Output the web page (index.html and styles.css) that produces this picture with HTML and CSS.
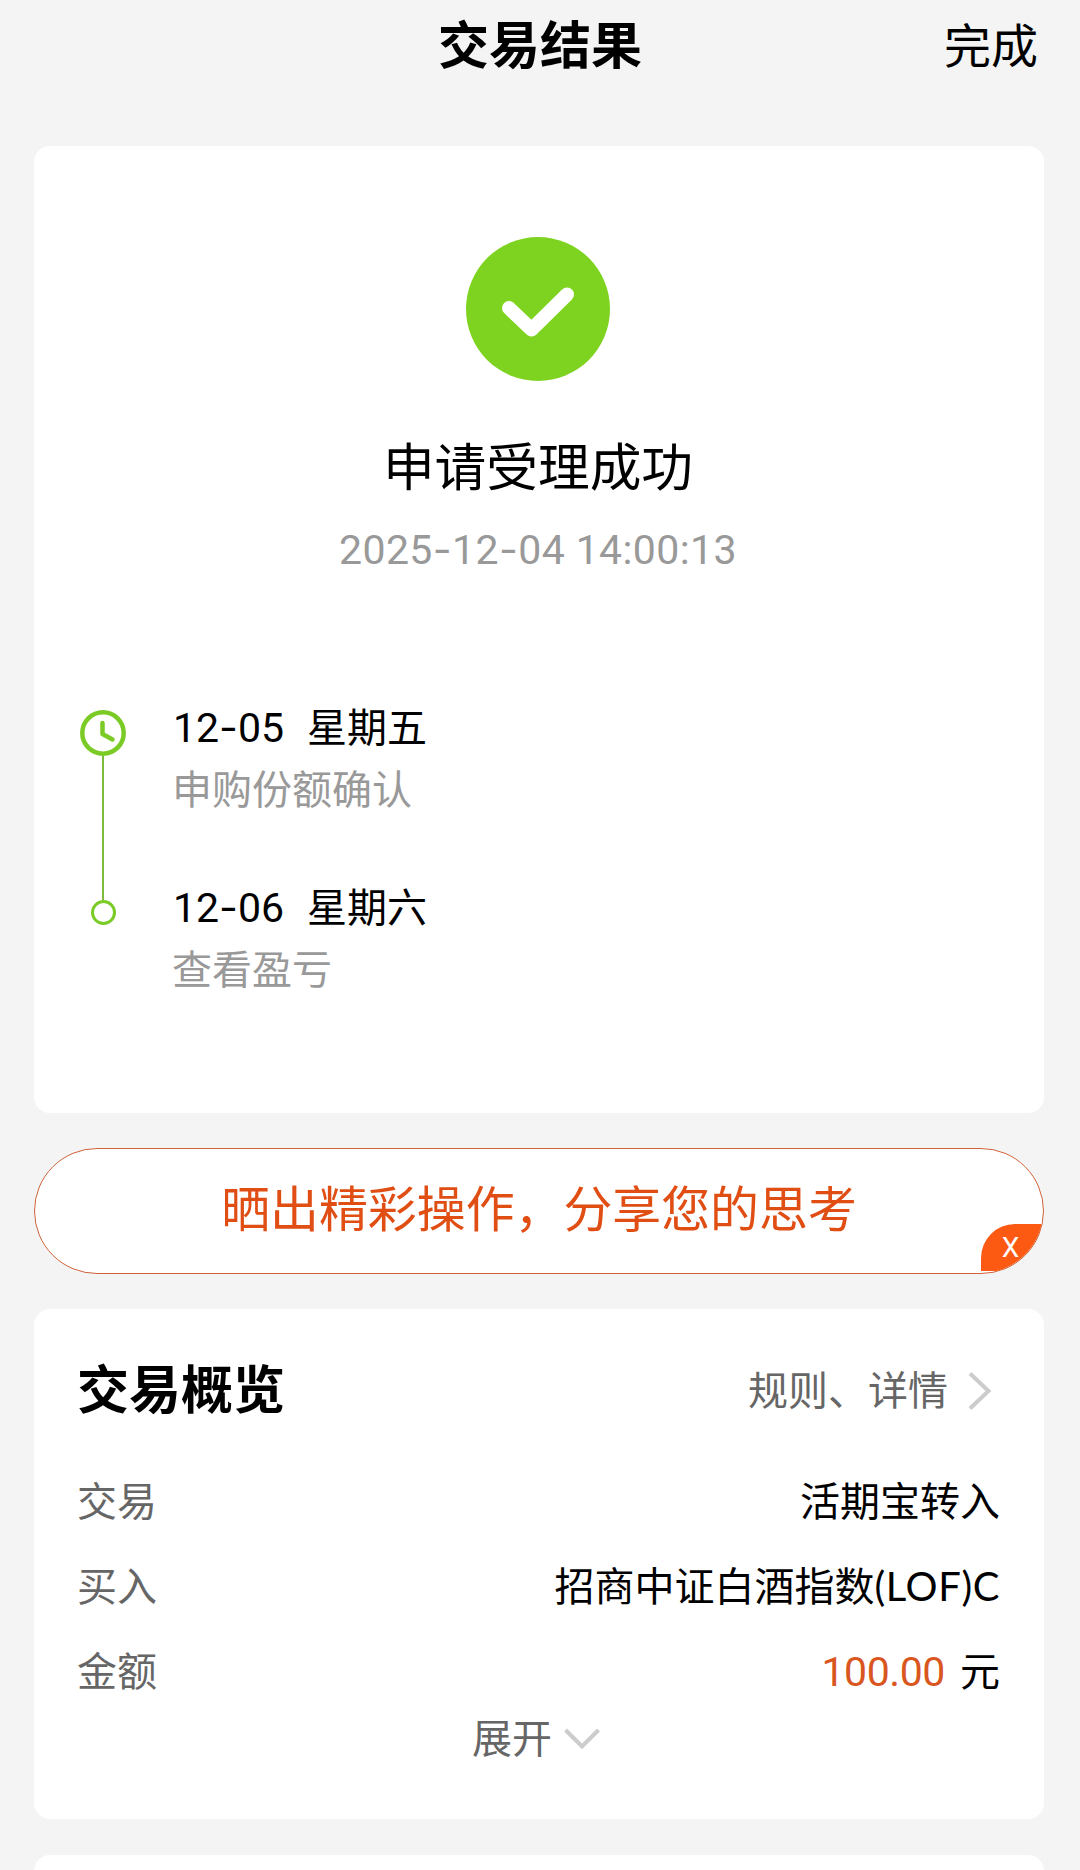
FILE: index.html
```
<!DOCTYPE html>
<html lang="zh-CN">
<head>
    <meta charset="UTF-8">
    <meta name="viewport" content="width=device-width, initial-scale=1.0">
    <title>交易结果</title>
    <link rel="stylesheet" href="styles.css">
</head>
<body>
    <header class="header">
        <h1>交易结果</h1>
        <a class="done">完成</a>
    </header>

    <section class="card result">
        <svg class="success-icon" viewBox="0 0 144 144">
            <circle cx="72" cy="72" r="72" fill="#7ed321"/>
            <path d="M43 71 L65.500 92.500 L101 57.500" fill="none" stroke="#fff" stroke-width="14" stroke-linecap="round" stroke-linejoin="round"/>
        </svg>
        <h2>申请受理成功</h2>
        <p class="time">2025<span class="dash">-</span>12<span class="dash">-</span>04 14:00:13</p>

        <ul class="timeline">
            <li>
                <div class="marker">
                    <svg width="46" height="46" viewBox="0 0 46 46" fill="none" stroke="#7acb25" stroke-width="4.500">
                        <circle cx="23" cy="23" r="20.700"/>
                        <path d="M22.500 13 V24 L32.500 29.500" stroke-linecap="round" stroke-linejoin="round"/>
                    </svg>
                    <div class="line"></div>
                </div>
                <div>
                    <p class="date"><span class="num">12<span class="dash">-</span>05</span>星期五</p>
                    <p class="desc">申购份额确认</p>
                </div>
            </li>
            <li>
                <div class="marker">
                    <div class="dot"></div>
                </div>
                <div>
                    <p class="date"><span class="num">12<span class="dash">-</span>06</span>星期六</p>
                    <p class="desc">查看盈亏</p>
                </div>
            </li>
        </ul>
    </section>

    <div class="share">
        <span>晒出精彩操作，分享您的思考</span>
        <div class="close">X</div>
    </div>

    <section class="card overview">
        <div class="row title-row">
            <h3>交易概览</h3>
            <a class="more">规则、详情
                <svg width="24" height="40" viewBox="0 0 24 40" fill="none" stroke="#ccc" stroke-width="4">
                    <path d="M2 2.500 L20.500 20 L2 37.500"/>
                </svg>
            </a>
        </div>
        <div class="row">
            <span class="label">交易</span>
            <span>活期宝转入</span>
        </div>
        <div class="row">
            <span class="label">买入</span>
            <span>招商中证白酒指数<span class="latin">(LOF)C</span></span>
        </div>
        <div class="row">
            <span class="label">金额</span>
            <span><span class="amount">100.00</span>元</span>
        </div>
        <div class="expand">展开
            <svg width="36" height="22" viewBox="0 0 36 22" fill="none" stroke="#ccc" stroke-width="4">
                <path d="M1.500 2 L18 18.500 L34.500 2"/>
            </svg>
        </div>
    </section>

    <section class="card next"></section>
</body>
</html>
```
FILE: styles.css
```
* {
    box-sizing: border-box;
    margin: 0;
    padding: 0;
}
body {
    height: 1870px;
    overflow: hidden;
    padding: 0 36px 0 34px;
    background-color: #f4f4f4;
    color: #000;
    font-family: "Noto Sans CJK SC", sans-serif;
    font-size: 40px;
}
.header {
    display: grid;
    grid-template-columns: 1fr auto 1fr;
    height: 146px;
    line-height: 84px;
}
.header h1 {
    grid-column: 2;
    padding-left: 2px;
    font-size: 51px;
}
.done {
    justify-self: end;
    margin-right: 6px;
    font-size: 47px;
    line-height: 86px;
}
.card {
    background-color: #fff;
    border-radius: 16px;
}

/* result */
.result {
    height: 967px;
    padding: 91px 47px 0 45px;
    text-align: center;
}
.success-icon {
    display: block;
    width: 144px;
    height: 144px;
    margin: 0 auto;
}
.result h2 {
    margin-top: 48px;
    font-size: 51.7px;
    font-weight: 400;
    line-height: 70px;
}
.time {
    margin-top: 25px;
    color: #999;
    font-family: Roboto, sans-serif;
    font-size: 41px;
    letter-spacing: 0.4px;
    line-height: 50px;
}
.dash {
    font-family: Inter, sans-serif;
}
.timeline {
    margin-top: 121px;
    padding-left: 1px;
    list-style: none;
    text-align: left;
}
.timeline li {
    display: flex;
    gap: 47px;
    height: 180px;
}
.marker {
    display: flex;
    flex-direction: column;
    align-items: center;
    width: 46px;
    padding-top: 14px;
}
.marker svg {
    flex-shrink: 0;
}
.line {
    flex: 1;
    width: 2px;
    margin-bottom: -24px;
    background-color: #7dbb3c;
}
.dot {
    width: 25px;
    height: 25px;
    margin-top: 10px;
    border: 3px solid #7acb25;
    border-radius: 50%;
}
.date {
    line-height: 59px;
}
.num {
    margin-right: 23px;
    font-family: Roboto, sans-serif;
    font-size: 41px;
}
.desc {
    margin-left: -1px;
    color: #999;
    line-height: 58px;
}

/* share banner */
.share {
    position: relative;
    height: 126px;
    margin: 35px 0;
    overflow: hidden;
    background-color: #fff;
    border: 1px solid #d0623a;
    border-radius: 63px;
    color: #e04e14;
    font-size: 48.9px;
    line-height: 113px;
    text-align: center;
}
.close {
    position: absolute;
    right: 0;
    bottom: 2px;
    width: 62px;
    height: 47px;
    padding-right: 3px;
    background-color: #fc5a12;
    border-top-left-radius: 34px;
    color: #fff;
    font-family: Roboto, sans-serif;
    font-size: 28px;
    line-height: 47px;
}

/* overview */
.overview {
    height: 510px;
    padding: 36px 44px 0 43px;
}
.row {
    display: flex;
    justify-content: space-between;
    height: 85px;
    line-height: 87px;
}
.title-row {
    height: 111px;
    line-height: 87px;
}
.title-row h3 {
    font-size: 52px;
    line-height: 84px;
}
.more {
    display: flex;
    gap: 20px;
    padding-right: 8px;
    color: #666;
}
.more svg {
    margin-top: 26px;
}
.label {
    color: #666;
}
.latin {
    font-family: Lato, sans-serif;
    letter-spacing: 0.6px;
}
.amount {
    margin-right: 15px;
    color: #d9561f;
    font-family: Roboto, sans-serif;
    font-size: 41px;
    letter-spacing: -0.4px;
}
.expand {
    display: flex;
    justify-content: center;
    align-items: center;
    gap: 12px;
    height: 50px;
    margin-right: 5px;
    color: #666;
    line-height: 50px;
}
.expand svg {
    margin-top: 5px;
}
.next {
    height: 60px;
    margin-top: 36px;
}
```
